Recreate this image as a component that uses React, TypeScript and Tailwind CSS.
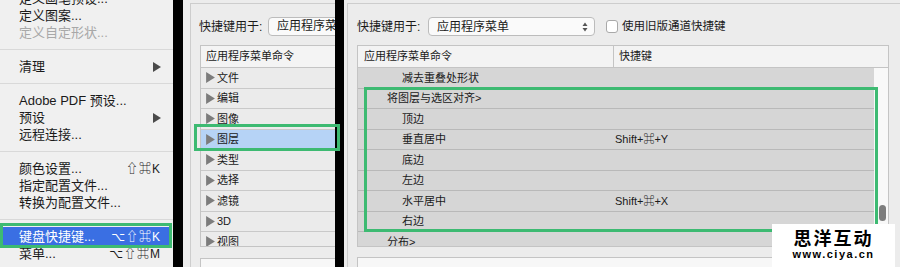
import React from 'react';

const font = 'font-["Liberation_Sans","Noto_Sans_CJK_SC","DejaVu_Sans",sans-serif]';

type Item = { t: string; dis?: boolean; sub?: boolean; k?: string; on?: boolean } | 'sep';

const menu: Item[] = [
  { t: '定义画笔预设...' },
  { t: '定义图案...' },
  { t: '定义自定形状...', dis: true },
  'sep',
  { t: '清理', sub: true },
  'sep',
  { t: 'Adobe PDF 预设...' },
  { t: '预设', sub: true },
  { t: '远程连接...' },
  'sep',
  { t: '颜色设置...', k: '⇧⌘K' },
  { t: '指定配置文件...' },
  { t: '转换为配置文件...' },
  'sep',
  { t: '键盘快捷键...', k: '⌥⇧⌘K', on: true },
  { t: '菜单...', k: '⌥⇧⌘M' },
];

const cmds = ['文件', '编辑', '图像', '图层', '类型', '选择', '滤镜', '3D', '视图'];

const rows = [
  { t: '减去重叠处形状', d: 2 },
  { t: '将图层与选区对齐>', d: 1 },
  { t: '顶边', d: 2 },
  { t: '垂直居中', d: 2, k: 'Shift+⌘+Y' },
  { t: '底边', d: 2 },
  { t: '左边', d: 2 },
  { t: '水平居中', d: 2, k: 'Shift+⌘+X' },
  { t: '右边', d: 2 },
  { t: '分布>', d: 1 },
];

function Tri({ className }: { className?: string }) {
  return (
    <svg width="8" height="10" viewBox="0 0 8 10" className={className}>
      <polygon points="0,0 8,5 0,10" fill="currentColor" />
    </svg>
  );
}

function UpDown() {
  return (
    <svg width="6" height="10" viewBox="0 0 6 10" className="text-[#555]">
      <polygon points="3,0.5 5.5,4 0.5,4" fill="currentColor" />
      <polygon points="3,9.5 5.5,6 0.5,6" fill="currentColor" />
    </svg>
  );
}

export default function App() {
  return (
    <div className={`relative flex w-[900px] h-[267px] overflow-hidden bg-black text-[#1a1a1a] ${font}`}>
      {/* Photoshop edit menu */}
      <div className="w-[173px] h-full shrink-0 overflow-hidden bg-[#f0f0f0] text-[13px]">
        <div className="mt-[-10px] flex flex-col">
          {menu.map((m, i) =>
            m === 'sep' ? (
              <div key={i} className="h-[17px] flex items-center">
                <div className="h-px w-full bg-[#d9d9d9]" />
              </div>
            ) : (
              <div
                key={i}
                className={`flex items-center justify-between ${
                  m.on
                    ? 'mx-[3px] my-[-1px] h-[19px] pl-[16px] pr-[9px] bg-[#3a6fe3] text-white'
                    : 'h-[17px] pl-[19px] pr-[12px]'
                } ${m.dis ? 'text-[#a8a8a8]' : ''}`}
              >
                <span>{m.t}</span>
                {m.sub && <Tri className="text-[#4a4a4a]" />}
                {m.k && <span className="text-[12px] tracking-[1px]">{m.k}</span>}
              </div>
            )
          )}
        </div>
      </div>
      <div className="w-[10px] shrink-0" />

      {/* middle dialog */}
      <div className="w-[152px] h-full shrink-0 overflow-hidden bg-[#ececec] pl-[7px]">
        <div className="mt-[3px] h-[264px] w-[300px] border-l border-t border-[#cdcdcd] pl-[8px] pt-[13px]">
          <div className="flex items-center h-[19px]">
            <span className="w-[69px] text-[12px]">快捷键用于:</span>
            <div className="h-[19px] w-[180px] rounded-l-[4px] border border-[#bcbcbc] bg-[#fafafa] pl-[8px] text-[12px] leading-[17px]">
              应用程序菜单
            </div>
          </div>
          <div className="ml-px mt-[9px] w-[250px] border border-[#c4c4c4] text-[11px]">
            <div className="h-[22px] flex items-center bg-[#f4f4f4] border-b border-[#c4c4c4] pl-[5px]">应用程序菜单命令</div>
            <div className="h-[178px] overflow-hidden">
              {cmds.map((c, i) => (
                <div
                  key={c}
                  className={`h-[20.5px] flex items-center border-b border-[#c9c9c9] pl-[5px] ${
                    i === 3 ? 'bg-[#b6d3f6]' : 'bg-[#ebebeb]'
                  }`}
                >
                  <Tri className="text-[#7c7c7c] w-[9px] h-[11px]" />
                  <span className="ml-[2px]">{c}</span>
                </div>
              ))}
            </div>
          </div>
          <div className="ml-px mt-[11px] h-[20px] w-[250px] border border-[#c4c4c4] bg-[#f7f7f7]" />
        </div>
      </div>
      <div className="w-[9px] shrink-0" />

      {/* right dialog */}
      <div className="flex-1 h-full overflow-hidden bg-[#ececec] pl-[3px]">
        <div className="mt-[3px] h-[264px] border-l border-t border-[#cdcdcd] pl-[9px] pt-[13px]">
          <div className="flex items-center h-[19px] text-[12px]">
            <span className="w-[71px]">快捷键用于:</span>
            <div className="h-[19px] w-[167px] flex items-center justify-between rounded-[4px] border border-[#bcbcbc] bg-[#fafafa] pl-[8px] pr-[6px]">
              <span>应用程序菜单</span>
              <UpDown />
            </div>
            <div className="ml-[11px] h-[13px] w-[12px] rounded-[3px] border border-[#a9a9a9] bg-white" />
            <span className="ml-[4px] text-[11.5px]">使用旧版通道快捷键</span>
          </div>
          <div className="mt-[9px] w-[532px] border border-[#c4c4c4] text-[11px]">
            <div className="h-[22px] flex items-center bg-[#f3f3f3] border-b border-[#c4c4c4]">
              <div className="w-[256px] h-full flex items-center border-r border-[#c4c4c4] pl-[6px]">应用程序菜单命令</div>
              <div className="pl-[5px]">快捷键</div>
            </div>
            <div className="flex h-[178px] overflow-hidden">
              <div className="flex-1 bg-[#dedede]">
                {rows.map((r) => (
                  <div key={r.t} className="h-[20.5px] flex items-center border-b border-[#b9b9b9] bg-[#d6d6d6]">
                    <span className={`${r.d === 2 ? 'pl-[44px]' : 'pl-[29px]'} w-[256px]`}>{r.t}</span>
                    {r.k && <span className="pl-[1px]">{r.k}</span>}
                  </div>
                ))}
              </div>
              <div className="w-[14px] bg-[#f8f8f8] pt-[137px] pl-[5px]">
                <div className="h-[16px] w-[7px] rounded-full bg-[#7d7d7d]" />
              </div>
            </div>
          </div>
          <div className="mt-[10px] h-[20px] w-[533px] border border-[#c4c4c4] bg-[#f7f7f7]" />
        </div>
      </div>

      {/* green highlight frames */}
      <div className="absolute left-0 top-[223px] w-[172px] h-[25px] border-[3px] border-[#3dba72]" />
      <div className="absolute left-[194px] top-[124px] w-[146px] h-[27px] border-[3px] border-[#3dba72]" />
      <div className="absolute left-[364px] top-[87px] w-[514px] h-[145px] border-[3px] border-[#3dba72]" />

      {/* watermark */}
      <div className="absolute left-[772px] top-[224px] w-[123px] h-[43px] bg-white flex flex-col items-center pt-[6px]">
        <span className="text-[18px] leading-[18px] font-bold tracking-[2px] text-black">思洋互动</span>
        <span className="text-[11px] leading-[13px] font-bold tracking-[1.5px] text-black">www.ciya.cn</span>
      </div>
    </div>
  );
}
